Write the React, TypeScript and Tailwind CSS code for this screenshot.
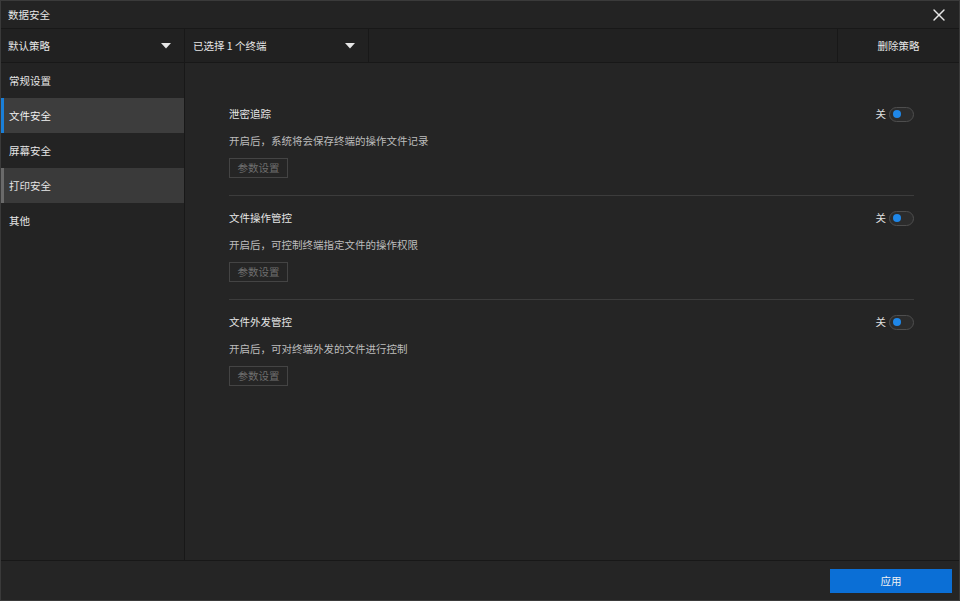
import { X } from "lucide-react";

const font = { fontFamily: '"Noto Sans CJK SC", "Noto Sans", sans-serif' };

const menu = [
    { label: "常规设置", state: "" },
    { label: "文件安全", state: "active" },
    { label: "屏幕安全", state: "" },
    { label: "打印安全", state: "hover" },
    { label: "其他", state: "" },
];

const sections = [
    { title: "泄密追踪", desc: "开启后，系统将会保存终端的操作文件记录" },
    { title: "文件操作管控", desc: "开启后，可控制终端指定文件的操作权限" },
    { title: "文件外发管控", desc: "开启后，可对终端外发的文件进行控制" },
];

const Caret = () => (
    <svg width="10" height="6" viewBox="0 0 10 6" className="shrink-0">
        <path d="M0 0 L10 0 L5 5.5 Z" fill="#e6e6e6" />
    </svg>
);

const Toggle = () => (
    <div className="flex items-center gap-[3px]">
        <span className="text-[#e0e0e0]">关</span>
        <div className="w-[25px] h-[15px] rounded-full border border-[#4e4e4e] bg-[#2c2c2c] flex items-center pl-[3px]">
            <div className="w-[8px] h-[8px] rounded-full bg-[#1f87e8]" />
        </div>
    </div>
);

export default function App() {
    return (
        <div style={font} className="w-[960px] h-[601px] flex flex-col bg-[#252525] border border-[#3a3a3a] text-[10.5px] text-[#e6e6e6] overflow-hidden">
            {/* title bar */}
            <div className="h-[28px] shrink-0 flex items-center justify-between pl-[7px] pr-[10px] bg-[#232323] border-b border-[#181818]">
                <span className="text-[#e6e6e6]">数据安全</span>
                <X size={20} strokeWidth={1.7} className="text-[#e6e6e6]" />
            </div>

            {/* toolbar */}
            <div className="h-[34px] shrink-0 flex bg-[#212121] border-b border-[#181818]">
                <div className="w-[184px] flex items-center justify-between pl-[7px] pr-[13px] border-r border-[#181818]">
                    <span>默认策略</span>
                    <Caret />
                </div>
                <div className="w-[184px] flex items-center justify-between pl-[8px] pr-[13px] border-r border-[#181818]">
                    <span>已选择 1 个终端</span>
                    <Caret />
                </div>
                <div className="flex-1" />
                <div className="w-[122px] flex items-center justify-center border-l border-[#181818]">
                    <span>删除策略</span>
                </div>
            </div>

            {/* body */}
            <div className="flex-1 flex min-h-0">
                <div className="w-[184px] shrink-0 bg-[#232323] border-r border-[#181818] flex flex-col">
                    {menu.map((m) => (
                        <div
                            key={m.label}
                            className={
                                m.state === "active"
                                    ? "h-[35px] flex items-center pl-[5px] border-l-[3px] border-[#1a7fd8] bg-[#3d3d3d] text-[#f0f0f0]"
                                    : m.state === "hover"
                                      ? "h-[35px] flex items-center pl-[5px] border-l-[3px] border-[#6a6a6a] bg-[#3a3a3a] text-[#e6e6e6]"
                                      : "h-[35px] flex items-center pl-[8px] text-[#e6e6e6]"
                            }
                        >
                            {m.label}
                        </div>
                    ))}
                </div>

                <div className="flex-1 pt-[41px] pl-[44px] pr-[45px] bg-[#252525]">
                    {sections.map((s, i) => (
                        <div key={s.title} className={i > 0 ? "border-t border-[#3c3c3c] pt-[12px]" : ""}>
                            <div className="h-[20px] flex items-center justify-between">
                                <span className="text-[#e6e6e6]">{s.title}</span>
                                <Toggle />
                            </div>
                            <div className="h-[20px] mt-[7px] flex items-center text-[#bdbdbd]">{s.desc}</div>
                            <div className="mt-[7px] mb-[17px] w-[59px] h-[20px] flex items-center justify-center border border-[#444] text-[10.5px] text-[#6e6e6e]">
                                参数设置
                            </div>
                        </div>
                    ))}
                </div>
            </div>

            {/* footer */}
            <div className="h-[40px] shrink-0 flex items-center justify-end pr-[7px] bg-[#252525] border-t border-[#181818]">
                <button className="w-[122px] h-[24px] bg-[#0b6fd6] text-[#f2f2f2] text-[10.5px]">应用</button>
            </div>
        </div>
    );
}
